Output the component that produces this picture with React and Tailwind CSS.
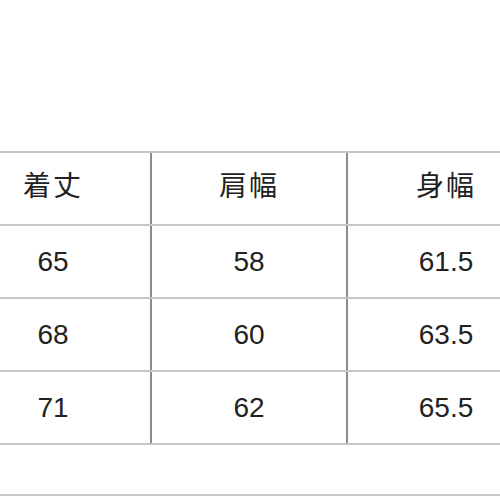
import React from 'react';

const rows = [
  ['65', '58', '61.5'],
  ['68', '60', '63.5'],
  ['71', '62', '65.5'],
];

const head = ['着丈', '肩幅', '身幅'];

function Row({ cells, cjk }) {
  return (
    <div className="flex h-[73px] border-t-2 border-[#c6c6c6]">
      {cells.map((c, i) => (
        <div
          key={i}
          className={`w-[196px] flex items-center justify-center text-[28px] text-[#222] ${i < 2 ? 'border-r-2 border-[#8c8c8c]' : ''} ${cjk ? 'pb-[4px] tracking-[2px]' : ''}`}
        >
          {c}
        </div>
      ))}
    </div>
  );
}

export default function App() {
  return (
    <div
      className="w-[500px] h-[500px] overflow-hidden bg-white"
      style={{ fontFamily: '"Liberation Sans", "Noto Sans CJK JP", sans-serif' }}
    >
      <div className="pt-[151px] ml-[-44px] w-[588px]">
        <Row cells={head} cjk />
        {rows.map((r, i) => (
          <Row key={i} cells={r} />
        ))}
        <div className="h-[51px] border-t-2 border-[#c6c6c6]" />
        <div className="border-t-2 border-[#c6c6c6]" />
      </div>
    </div>
  );
}
